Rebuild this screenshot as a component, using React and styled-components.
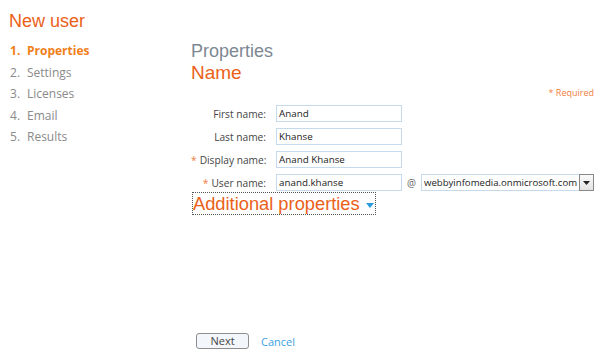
import React from 'react';
import styled, { createGlobalStyle } from 'styled-components';

const Global = createGlobalStyle`
  body {
    margin: 0;
    background: #fff;
    font-family: "Segoe UI", "Open Sans", "Liberation Sans", sans-serif;
  }
`;

const Page = styled.div`
  width: 598px;
  height: 354px;
  display: flex;
  flex-direction: column;
  box-sizing: border-box;
  padding: 9px 0 5px 9px;
  overflow: hidden;
`;

const Title = styled.h1`
  margin: 0;
  font-family: "Liberation Sans", Arial, sans-serif;
  font-weight: normal;
  font-size: 18px;
  line-height: 24px;
  color: #eb6119;
`;

const Body = styled.div`
  flex: 1;
  display: flex;
`;

const Steps = styled.ol`
  list-style: none;
  margin: 7px 0 0;
  padding: 0 0 0 1px;
  width: 181px;
  flex-shrink: 0;
`;

const Step = styled.li`
  font-size: 12px;
  line-height: 21.5px;
  color: ${p => (p.$active ? '#f0801a' : '#8a8a8a')};
  font-weight: ${p => (p.$active ? 'bold' : 'normal')};
  span {
    display: inline-block;
    width: 17px;
  }
`;

const Main = styled.div`
  flex: 1;
  min-width: 0;
  display: flex;
  flex-direction: column;
  padding: 7px 4px 0 0;
`;

const Heading = styled.h2`
  margin: 0;
  font-family: "Liberation Sans", Arial, sans-serif;
  font-weight: normal;
  font-size: 18px;
  line-height: 22px;
  color: #7d8893;
`;

const Section = styled.h3`
  margin: 0;
  font-family: "Liberation Sans", Arial, sans-serif;
  font-weight: normal;
  font-size: 19px;
  line-height: 22px;
  color: #eb6119;
`;

const Required = styled.div`
  align-self: flex-end;
  margin-top: 3px;
  font-size: 9px;
  line-height: 12px;
  color: #f0803c;
`;

const Form = styled.div`
  display: grid;
  grid-template-columns: 75px auto;
  column-gap: 10px;
  row-gap: 6px;
  margin-top: 6px;
  align-items: center;
`;

const Label = styled.label`
  text-align: right;
  font-size: 10.2px;
  color: #444;
  white-space: nowrap;
  em {
    font-style: normal;
    color: #f0803c;
    margin-right: 3px;
  }
`;

const Field = styled.div`
  display: flex;
  align-items: center;
`;

const Input = styled.input`
  box-sizing: border-box;
  width: 126px;
  height: 17px;
  border: 1px solid #c6daee;
  padding: 0 2px;
  font-family: inherit;
  font-size: 9.8px;
  color: #222;
  outline: none;
`;

const At = styled.span`
  font-size: 10px;
  color: #666;
  margin: 0 5px 0 5px;
`;

const Select = styled.div`
  display: flex;
  align-items: stretch;
  height: 17px;
  box-sizing: border-box;
  border: 1px solid #c6daee;
  font-size: 9.6px;
  color: #222;
  span {
    padding: 0 2px;
    line-height: 15px;
    white-space: nowrap;
  }
`;

const DropButton = styled.div`
  width: 13px;
  border: 1px solid #888;
  background: linear-gradient(#fafafa, #e2e2e2);
  display: flex;
  align-items: center;
  justify-content: center;
  margin: -1px -1px -1px 0;
  svg { display: block; }
`;

const Additional = styled.div`
  align-self: flex-start;
  margin: 1px 0 0 1px;
  border: 1px dotted #555;
  display: flex;
  align-items: center;
  gap: 6px;
  padding-right: 1px;
  font-family: "Liberation Sans", Arial, sans-serif;
  font-size: 18.3px;
  line-height: 21px;
  color: #eb6119;
  svg { margin-top: 4px; }
`;

const Footer = styled.div`
  margin-top: auto;
  padding-left: 5px;
  display: flex;
  align-items: center;
  gap: 12px;
`;

const Button = styled.button`
  width: 53px;
  height: 16px;
  padding: 0;
  border: 1px solid #8e8e8e;
  border-radius: 3px;
  background: #f3f7fb;
  font-family: inherit;
  font-size: 11px;
  line-height: 14px;
  color: #444;
`;

const Link = styled.a`
  font-size: 11px;
  color: #3a9fe0;
  text-decoration: none;
`;

const steps = ['Properties', 'Settings', 'Licenses', 'Email', 'Results'];

export default function App() {
  return (
    <Page>
      <Global />
      <Title>New user</Title>
      <Body>
        <Steps>
          {steps.map((s, i) => (
            <Step key={s} $active={i === 0}>
              <span>{i + 1}.</span>{s}
            </Step>
          ))}
        </Steps>
        <Main>
          <Heading>Properties</Heading>
          <Section>Name</Section>
          <Required>* Required</Required>
          <Form>
            <Label>First name:</Label>
            <Field><Input defaultValue="Anand" /></Field>
            <Label>Last name:</Label>
            <Field><Input defaultValue="Khanse" /></Field>
            <Label><em>*</em>Display name:</Label>
            <Field><Input defaultValue="Anand Khanse" /></Field>
            <Label><em>*</em>User name:</Label>
            <Field>
              <Input defaultValue="anand.khanse" />
              <At>@</At>
              <Select>
                <span>webbyinfomedia.onmicrosoft.com</span>
                <DropButton>
                  <svg width="7" height="4" viewBox="0 0 7 4"><path d="M0 0h7L3.5 4z" fill="#222" /></svg>
                </DropButton>
              </Select>
            </Field>
          </Form>
          <Additional>
            Additional properties
            <svg width="8" height="5" viewBox="0 0 8 5"><path d="M0 0h8L4 5z" fill="#2b9be0" /></svg>
          </Additional>
          <Footer>
            <Button>Next</Button>
            <Link href="#">Cancel</Link>
          </Footer>
        </Main>
      </Body>
    </Page>
  );
}
